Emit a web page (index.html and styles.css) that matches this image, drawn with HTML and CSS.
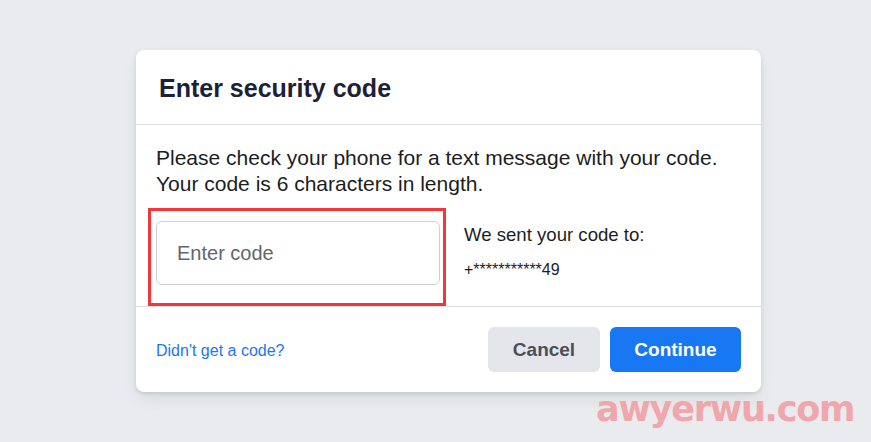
FILE: index.html
```html
<!DOCTYPE html>
<html lang="en">
<head>
	<meta charset="UTF-8">
	<title>Enter security code</title>
	<link rel="stylesheet" href="styles.css">
</head>
<body>

	<div class="page">
		<div class="card">
			<div class="card-header">Enter security code</div>

			<div class="card-body">
				<div class="intro">
					Please check your phone for a text message with your code.<br>
					Your code is 6 characters in length.
				</div>

				<div class="code-row">
					<div class="highlight">
						<input type="text" class="code-input" placeholder="Enter code">
					</div>
					<div class="sent-to">
						<div class="sent-label">We sent your code to:</div>
						<div class="phone">+***********49</div>
					</div>
				</div>
			</div>

			<div class="card-footer">
				<a href="#" class="resend">Didn't get a code?</a>
				<div class="buttons">
					<button class="btn btn-cancel">Cancel</button>
					<button class="btn btn-continue">Continue</button>
				</div>
			</div>
		</div>
	</div>

	<div class="watermark">awyerwu.com</div>

</body>
</html>
```

FILE: styles.css
```css
body {
	margin: 0;
	background: #e9ebee;
	font-family: "Liberation Sans", Arial, sans-serif;
	color: #1c1e21;
	height: 442px;
	overflow: hidden;
}

.page {
	padding: 50px 0 0 136px;
}

.card {
	width: 625px;
	background: #fff;
	border-radius: 8px;
	box-shadow: 0 2px 4px rgba(0, 0, 0, 0.1), 0 8px 16px rgba(0, 0, 0, 0.06);
}

.card-header {
	height: 75px;
	box-sizing: border-box;
	padding: 24px 23px 0;
	font-size: 25px;
	font-weight: bold;
	color: #1c2138;
	border-bottom: 1px solid #dddfe2;
}

.card-body {
	padding: 20px 20px 0;
	border-bottom: 1px solid #dddfe2;
}

.intro {
	font-size: 21px;
	line-height: 26px;
}

.code-row {
	display: flex;
	margin-top: 11px;
	margin-left: -8px;
}

.highlight {
	width: 292px;
	height: 92px;
	border: 3px solid #f2373a;
	position: relative;
}

/* input sits inside the red marker box */
.code-input {
	position: absolute;
	left: 5px;
	top: 10px;
	width: 284px;
	height: 64px;
	box-sizing: border-box;
	border: 1px solid #ccd0d5;
	border-radius: 6px;
	padding: 0 20px;
	font-family: inherit;
	font-size: 20px;
	color: #1c1e21;
	outline: none;
}

.code-input::placeholder {
	color: #606770;
}

.sent-to {
	padding: 15px 0 0 18px;
}

.sent-label {
	font-size: 18.6px;
	line-height: 24px;
}

.phone {
	font-size: 16px;
	margin-top: 14px;
}

.card-footer {
	display: flex;
	justify-content: space-between;
	align-items: center;
	padding: 20px 20px 20px;
}

.resend {
	color: #1877f2;
	font-size: 16px;
	text-decoration: none;
	padding-top: 3px;
}

.buttons {
	display: flex;
	gap: 10px;
}

.btn {
	height: 45px;
	border: none;
	border-radius: 6px;
	font-family: inherit;
	font-size: 19px;
	font-weight: bold;
	cursor: pointer;
}

.btn-cancel {
	width: 112px;
	background: #e4e6eb;
	color: #4b4f56;
}

.btn-continue {
	width: 131px;
	background: #1877f2;
	color: #fff;
}

.watermark {
	position: absolute;
	left: 596px;
	top: 392px;
	font-family: "DejaVu Sans", sans-serif;
	font-size: 35px;
	line-height: 35px;
	font-weight: bold;
	letter-spacing: -1.2px;
	color: #f0a6aa;
}
```
